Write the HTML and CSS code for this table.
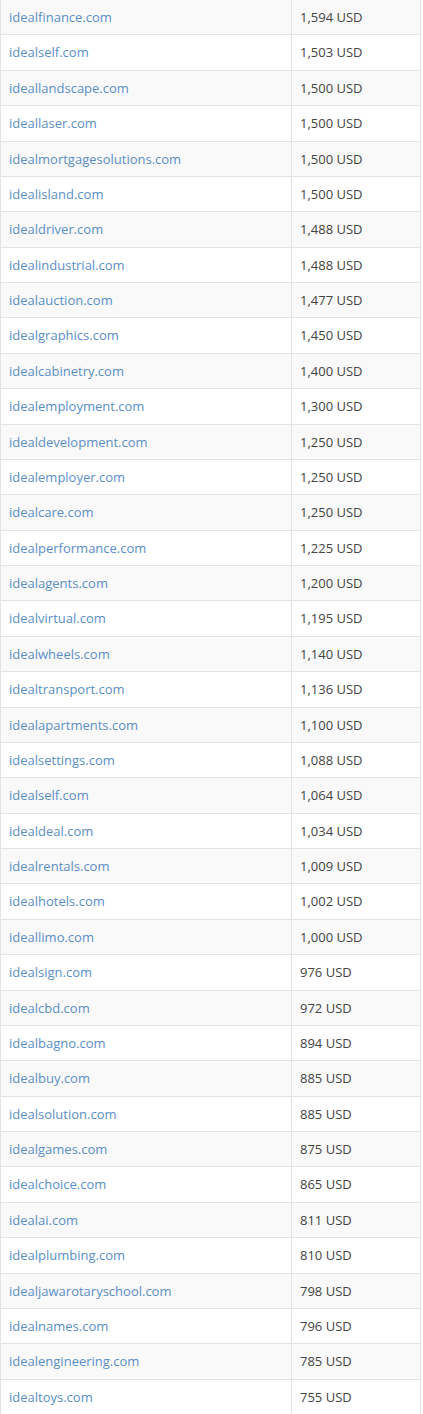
FILE: index.html
```html
<!DOCTYPE html>
<html>
<head>
<meta charset="utf-8">
<link rel="stylesheet" href="styles.css">
</head>
<body>
<table class="domains">
<tbody>
<tr><td class="name"><a href="#">idealfinance.com</a></td><td class="price">1,594 USD</td></tr>
<tr><td class="name"><a href="#">idealself.com</a></td><td class="price">1,503 USD</td></tr>
<tr><td class="name"><a href="#">ideallandscape.com</a></td><td class="price">1,500 USD</td></tr>
<tr><td class="name"><a href="#">ideallaser.com</a></td><td class="price">1,500 USD</td></tr>
<tr><td class="name"><a href="#">idealmortgagesolutions.com</a></td><td class="price">1,500 USD</td></tr>
<tr><td class="name"><a href="#">idealisland.com</a></td><td class="price">1,500 USD</td></tr>
<tr><td class="name"><a href="#">idealdriver.com</a></td><td class="price">1,488 USD</td></tr>
<tr><td class="name"><a href="#">idealindustrial.com</a></td><td class="price">1,488 USD</td></tr>
<tr><td class="name"><a href="#">idealauction.com</a></td><td class="price">1,477 USD</td></tr>
<tr><td class="name"><a href="#">idealgraphics.com</a></td><td class="price">1,450 USD</td></tr>
<tr><td class="name"><a href="#">idealcabinetry.com</a></td><td class="price">1,400 USD</td></tr>
<tr><td class="name"><a href="#">idealemployment.com</a></td><td class="price">1,300 USD</td></tr>
<tr><td class="name"><a href="#">idealdevelopment.com</a></td><td class="price">1,250 USD</td></tr>
<tr><td class="name"><a href="#">idealemployer.com</a></td><td class="price">1,250 USD</td></tr>
<tr><td class="name"><a href="#">idealcare.com</a></td><td class="price">1,250 USD</td></tr>
<tr><td class="name"><a href="#">idealperformance.com</a></td><td class="price">1,225 USD</td></tr>
<tr><td class="name"><a href="#">idealagents.com</a></td><td class="price">1,200 USD</td></tr>
<tr><td class="name"><a href="#">idealvirtual.com</a></td><td class="price">1,195 USD</td></tr>
<tr><td class="name"><a href="#">idealwheels.com</a></td><td class="price">1,140 USD</td></tr>
<tr><td class="name"><a href="#">idealtransport.com</a></td><td class="price">1,136 USD</td></tr>
<tr><td class="name"><a href="#">idealapartments.com</a></td><td class="price">1,100 USD</td></tr>
<tr><td class="name"><a href="#">idealsettings.com</a></td><td class="price">1,088 USD</td></tr>
<tr><td class="name"><a href="#">idealself.com</a></td><td class="price">1,064 USD</td></tr>
<tr><td class="name"><a href="#">idealdeal.com</a></td><td class="price">1,034 USD</td></tr>
<tr><td class="name"><a href="#">idealrentals.com</a></td><td class="price">1,009 USD</td></tr>
<tr><td class="name"><a href="#">idealhotels.com</a></td><td class="price">1,002 USD</td></tr>
<tr><td class="name"><a href="#">ideallimo.com</a></td><td class="price">1,000 USD</td></tr>
<tr><td class="name"><a href="#">idealsign.com</a></td><td class="price">976 USD</td></tr>
<tr><td class="name"><a href="#">idealcbd.com</a></td><td class="price">972 USD</td></tr>
<tr><td class="name"><a href="#">idealbagno.com</a></td><td class="price">894 USD</td></tr>
<tr><td class="name"><a href="#">idealbuy.com</a></td><td class="price">885 USD</td></tr>
<tr><td class="name"><a href="#">idealsolution.com</a></td><td class="price">885 USD</td></tr>
<tr><td class="name"><a href="#">idealgames.com</a></td><td class="price">875 USD</td></tr>
<tr><td class="name"><a href="#">idealchoice.com</a></td><td class="price">865 USD</td></tr>
<tr><td class="name"><a href="#">idealai.com</a></td><td class="price">811 USD</td></tr>
<tr><td class="name"><a href="#">idealplumbing.com</a></td><td class="price">810 USD</td></tr>
<tr><td class="name"><a href="#">idealjawarotaryschool.com</a></td><td class="price">798 USD</td></tr>
<tr><td class="name"><a href="#">idealnames.com</a></td><td class="price">796 USD</td></tr>
<tr><td class="name"><a href="#">idealengineering.com</a></td><td class="price">785 USD</td></tr>
<tr><td class="name"><a href="#">idealtoys.com</a></td><td class="price">755 USD</td></tr>
</tbody>
</table>
</body>
</html>
```

FILE: styles.css
```css
html, body {
  margin: 0;
  padding: 0;
  background: #fff;
}

body {
  font-family: "Open Sans", "Liberation Sans", sans-serif;
  font-size: 13px;
  color: #444;
}

.domains {
  width: 421px;
  margin-top: -1px;
  border-collapse: collapse;
  border: 1px solid #e3e3e3;
}

.domains td {
  padding: 8px 8px;
  line-height: 18.37px;
  border-top: 1px solid #e3e3e3;
  vertical-align: top;
  white-space: nowrap;
}

.domains tr:nth-child(odd) td {
  background: #f9f9f9;
}

.domains .name {
  width: 274px;
  border-right: 1px solid #e3e3e3;
}

.domains a {
  color: #5b8ec6;
  text-decoration: none;
}

.domains .price {
  color: #444;
}
```
